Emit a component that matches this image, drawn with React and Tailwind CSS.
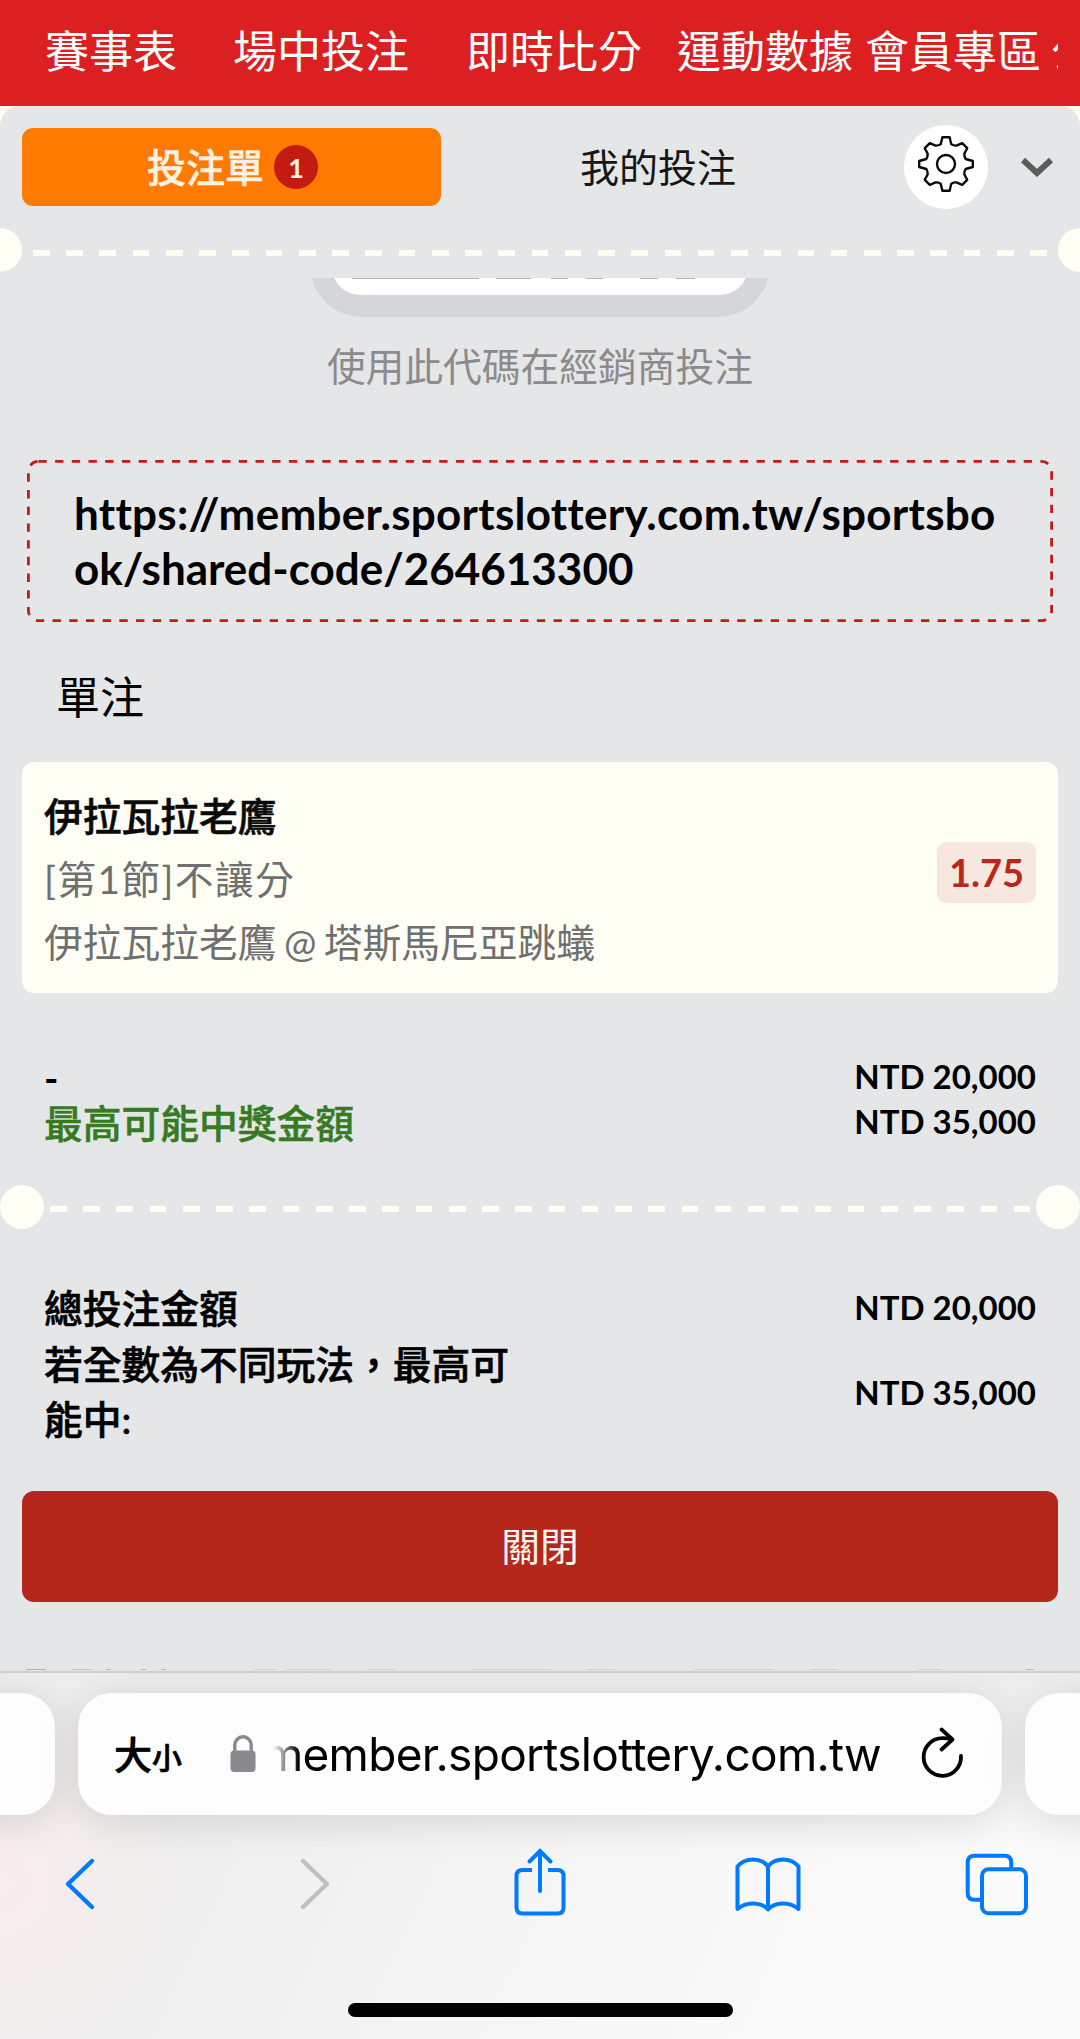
import React from "react";

const navItems = [
  { label: "賽事表", space: "mr-[56px]" },
  { label: "場中投注", space: "mr-[57px]" },
  { label: "即時比分", space: "mr-[35px]" },
  { label: "運動數據", space: "mr-[12px]" },
  { label: "會員專區", space: "mr-[10px]" },
  { label: "公告", space: "" },
];

function NavBar() {
  return (
    <nav className="h-[106px] shrink-0 bg-[#dc1f20] pl-[45px] pr-[22px]">
      <div className="flex h-[102px] items-center overflow-hidden whitespace-nowrap text-[44px] leading-none text-white">
        {navItems.map((item) => (
          <span key={item.label} className={`shrink-0 ${item.space}`}>
            {item.label}
          </span>
        ))}
      </div>
    </nav>
  );
}

function GearIcon() {
  return (
    <svg viewBox="0 0 58 58" className="mb-[6px] h-[58px] w-[58px]" fill="none" stroke="#0b0b0b" strokeWidth="2.4" strokeLinejoin="round">
      <path d="M25.4 2.2 H32.6 L34.3 9.3 Q37 10.8 39.4 10.6 L45.2 8.2 L50.2 13.2 L47.3 18.8 Q47.3 21.8 48.6 24 L55.8 26 V32 L48.6 34 Q47.3 36.2 47.3 39.2 L50.2 44.8 L45.2 49.8 L39.4 47.4 Q37 47.2 34.3 48.7 L32.6 55.8 H25.4 L23.7 48.7 Q21 47.2 18.6 47.4 L12.8 49.8 L7.8 44.8 L10.7 39.2 Q10.7 36.2 9.4 34 L2.2 32 V26 L9.4 24 Q10.7 21.8 10.7 18.8 L7.8 13.2 L12.8 8.2 L18.6 10.6 Q21 10.8 23.7 9.3 Z" />
      <circle cx="29" cy="29" r="9" />
    </svg>
  );
}

function Tabs() {
  return (
    <div className="flex h-[78px] items-center pl-[22px]">
      <button className="flex h-[78px] w-[419px] items-center justify-center rounded-[11px] bg-[#ff7a00] pl-[2px] text-[39px] leading-none font-medium text-[#fff1e2] [-webkit-text-stroke:0.5px]">
        投注單
        <span className="ml-[10px] flex h-[44px] w-[44px] items-center justify-center rounded-full bg-[#c31a12] text-[27px] font-bold [-webkit-text-stroke:0px]">
          1
        </span>
      </button>
      <button className="ml-[139px] text-[39px] leading-none text-[#161616]">我的投注</button>
      <button className="ml-[168px] flex h-[84px] w-[84px] shrink-0 items-center justify-center rounded-full bg-white">
        <GearIcon />
      </button>
      <svg viewBox="0 0 34 20" className="ml-[32px] h-[20px] w-[34px]" fill="none" stroke="#5c5c5c" strokeWidth="6">
        <path d="M3 3 L17 16 L31 3" />
      </svg>
    </div>
  );
}

function UrlBox() {
  return (
    <div className="relative mx-[27px] h-[162px] pt-[26px] pl-[47px]">
      <svg className="absolute inset-0 h-full w-full" fill="none" stroke="#c31a1a" strokeWidth="2.8" strokeDasharray="8.35 8.35">
        <rect x="1.4" y="1.4" width="1023.2" height="159.2" rx="10" />
      </svg>
      <p className="w-[932px] text-[44px] leading-[55px] font-bold break-all text-black [font-variant-ligatures:none]">
        <span className="tracking-[0.27px]">https://member.sportslottery.com.tw/sportsbo</span>ok/shared-code/264613300
      </p>
    </div>
  );
}

function BetCard() {
  return (
    <div className="mx-[22px] flex h-[231px] items-center justify-between rounded-[12px] bg-[#fefef4] px-[22px]">
      <div className="pt-[4px] text-[38.75px] leading-[63px] text-[#6f6f6f]">
        <p className="font-medium text-[#0a0a0a] [-webkit-text-stroke:0.6px]">伊拉瓦拉老鷹</p>
        <p className="tracking-[1.4px]">[第1節]不讓分</p>
        <p className="[word-spacing:-2.5px]">伊拉瓦拉老鷹 @ 塔斯馬尼亞跳蟻</p>
      </div>
      <span className="mt-[-10px] flex h-[61px] w-[99px] items-center justify-center rounded-[9px] bg-[#f8e7df] text-[38px] font-bold text-[#b9271b]">
        1.75
      </span>
    </div>
  );
}

function BrowserBar() {
  return (
    <footer className="flex h-[368px] shrink-0 flex-col items-center overflow-hidden border-t-2 border-[#cfcfcf] bg-[radial-gradient(circle_at_0px_210px,#f8ecec_0px,transparent_190px),linear-gradient(to_bottom,#ededed_0px,transparent_180px),linear-gradient(115deg,#eeeeee_20%,#f6f6f6_55%,#fafafa_85%)]">
      <div className="mt-[20px] flex shrink-0 gap-[23px]">
        <div className="h-[122px] w-[160px] rounded-[34px] bg-[#fdfdfd] shadow-[0_6px_40px_rgba(0,0,0,0.12)]" />
        <div className="flex h-[122px] w-[924px] items-center rounded-[34px] bg-[#fdfdfd] pl-[36px] shadow-[0_6px_40px_rgba(0,0,0,0.12)]">
          <div className="flex w-[116px] items-baseline leading-none font-medium text-black [-webkit-text-stroke:0.7px]">
            <span className="text-[38px]">大</span>
            <span className="text-[30px]">小</span>
          </div>
          <svg viewBox="0 0 26 38" className="h-[38px] w-[26px] shrink-0" fill="none">
            <path d="M4.8 17 V10 a8.2 8.2 0 0 1 16.4 0 V17" stroke="#8a898e" strokeWidth="3.4" />
            <rect x="0.5" y="15.5" width="25" height="21.5" rx="4" fill="#8a898e" />
          </svg>
          <div className="ml-[17px] flex w-[608px] justify-end overflow-hidden font-['Inter','Liberation_Sans',sans-serif] text-[46px] leading-[60px] tracking-[-0.7px] whitespace-nowrap text-black [mask-image:linear-gradient(to_right,transparent_0px,black_26px)]">
            <span className="shrink-0">member.sportslottery.com.tw</span>
          </div>
          <svg viewBox="0 0 46 56" className="ml-[38px] h-[56px] w-[46px]" fill="none" stroke="#000" strokeWidth="3.8" strokeLinecap="round" strokeLinejoin="round">
            <path d="M42 30 A18.7 18.8 0 1 1 23.3 12.2 Q29 12.2 33 13.5" />
            <path d="M22.5 3.5 L33.5 13.5 L22.5 23.5" />
          </svg>
        </div>
        <div className="h-[122px] w-[160px] rounded-[34px] bg-[#fdfdfd] shadow-[0_6px_40px_rgba(0,0,0,0.12)]" />
      </div>
      <div className="mt-[31px] flex h-[76px] w-full shrink-0 items-center pl-[62px] text-[#007aff]">
        <svg viewBox="0 0 36 76" className="h-[76px] w-[36px]" fill="none" stroke="currentColor" strokeWidth="4.4" strokeLinecap="round" strokeLinejoin="round">
          <path d="M30 15 L6 38 L30 61" />
        </svg>
        <svg viewBox="0 0 36 76" className="ml-[199px] h-[76px] w-[36px]" fill="none" stroke="#bfbfbf" strokeWidth="4.4" strokeLinecap="round" strokeLinejoin="round">
          <path d="M6 15 L30 38 L6 61" />
        </svg>
        <svg viewBox="0 0 56 76" className="ml-[179px] h-[76px] w-[56px]" fill="none" stroke="currentColor" strokeWidth="4">
          <path d="M20 24 H10.5 Q4.5 24 4.5 30 V61.5 Q4.5 67.5 10.5 67.5 H45.5 Q51.5 67.5 51.5 61.5 V30 Q51.5 24 45.5 24 H36" />
          <path d="M28 45 V5.5 M17.5 15.5 L28 5 L38.5 15.5" strokeLinecap="round" />
        </svg>
        <svg viewBox="0 0 68 76" className="ml-[166px] h-[76px] w-[68px]" fill="none" stroke="currentColor" strokeWidth="4" strokeLinejoin="round">
          <path d="M34 20.5 C27 11 11 11 3.5 20.5 V63 C12 55.5 27 55.5 34 63.5 C41 55.5 56 55.5 64.5 63 V20.5 C57 11 41 11 34 20.5 Z M34 20.5 V63.5" />
        </svg>
        <svg viewBox="0 0 64 76" className="ml-[162px] h-[76px] w-[64px]" fill="none" stroke="currentColor" strokeWidth="4">
          <path d="M17 53.7 H10.5 Q3.7 53.7 3.7 47 V16.5 Q3.7 9.8 10.5 9.8 H40.5 Q47.2 9.8 47.2 16.5 V23" />
          <rect x="18" y="23.2" width="44" height="44" rx="6.5" />
        </svg>
      </div>
      <div className="mt-[81px] h-[14px] w-[385px] shrink-0 rounded-full bg-black" />
    </footer>
  );
}

export default function App() {
  return (
    <div className="flex h-[2039px] w-[1080px] flex-col overflow-hidden bg-[#fefef0] font-['Lato','Noto_Sans_CJK_TC',sans-serif]">
      <NavBar />
      <main className="flex-1 overflow-hidden rounded-t-[20px] bg-[#e5e6e8] pt-[22px]">
        <Tabs />

        <div className="mt-[22px] flex h-[44px] items-center justify-between">
          <div className="ml-[-22px] h-[44px] w-[44px] rounded-full bg-[#fefef4]" />
          <div className="mt-[6px] h-[6px] w-[1014px] bg-[repeating-linear-gradient(to_right,#fefef4_0px,#fefef4_16.62px,transparent_16.62px,transparent_33.24px)]" />
          <div className="mr-[-22px] h-[44px] w-[44px] rounded-full bg-[#fefef4]" />
        </div>

        {/* lower edge of the scrolled QR code */}
        <div className="mx-auto mt-[6px] flex h-[39px] w-[460px] items-end overflow-hidden">
          <div className="h-[120px] w-[460px] shrink-0 rounded-[52px] bg-[#d5d6da] px-[22px] pb-[22px]">
            <div className="flex h-[98px] flex-col justify-end overflow-hidden rounded-[28px] bg-white pb-[16px] pl-[20px]">
              <div className="flex h-px">
                <i className="h-px w-[127px] bg-[#b5b5b5]" />
                <i className="ml-[17px] h-px w-[35px] bg-[#b5b5b5]" />
                <i className="ml-[20px] h-px w-[17px] bg-[#b5b5b5]" />
                <i className="ml-[18px] h-px w-[17px] bg-[#b5b5b5]" />
                <i className="ml-[37px] h-px w-[18px] bg-[#b5b5b5]" />
                <i className="ml-[18px] h-px w-[19px] bg-[#b5b5b5]" />
              </div>
            </div>
          </div>
        </div>

        <p className="mt-[19px] text-center text-[38.75px] leading-[60px] text-[#8b8b8b]">使用此代碼在經銷商投注</p>

        <div className="mt-[64px]">
          <UrlBox />
        </div>

        <h2 className="mt-[45px] ml-[56px] text-[44px] leading-[60px] text-black">單注</h2>

        <div className="mt-[35px]">
          <BetCard />
        </div>

        <div className="mt-[61px] flex h-[100px] justify-between px-[44px] font-bold text-black">
          <div className="text-[38.75px] leading-[46px]">
            <p className="mt-px mb-[-1px]">-</p>
            <p className="font-medium text-[#367b22] [-webkit-text-stroke:0.5px]">最高可能中獎金額</p>
          </div>
          <div className="text-right text-[33px] leading-[44.5px]">
            <p>NTD 20,000</p>
            <p>NTD 35,000</p>
          </div>
        </div>

        <div className="mt-[30px] flex h-[45px] items-center justify-between">
          <div className="h-[44px] w-[44px] rounded-full bg-[#fefef4]" />
          <div className="mt-[5px] h-[6px] w-[980px] bg-[repeating-linear-gradient(to_right,#fefef4_0px,#fefef4_16.62px,transparent_16.62px,transparent_33.24px)]" />
          <div className="h-[44px] w-[44px] rounded-full bg-[#fefef4]" />
        </div>

        <div className="mt-[52px] px-[44px] text-[38.75px] leading-[55.5px] font-medium text-black">
          <div className="flex items-center justify-between">
            <span className="[-webkit-text-stroke:0.6px]">總投注金額</span>
            <span className="mt-[-2px] text-[33px] font-bold">NTD 20,000</span>
          </div>
          <div className="flex items-center justify-between">
            <span className="w-[480px] [-webkit-text-stroke:0.6px]">若全數為不同玩法，最高可能中:</span>
            <span className="mt-[2px] text-[33px] font-bold">NTD 35,000</span>
          </div>
        </div>

        <button className="mt-[43px] ml-[22px] block h-[111px] w-[1036px] rounded-[12px] bg-[#b5261b] text-[38.75px] text-[#fff6f3]">
          關閉
        </button>

        {/* tops of the next text row, just above the browser bar */}
        <div className="mt-[67px] flex h-px pl-[26px]">
          <i className="h-px w-[20px] bg-[#b4b4b8]" />
          <i className="ml-[25px] h-px w-[22px] bg-[#c4c4c8]" />
          <i className="ml-[13px] h-px w-[5px] bg-[#b4b4b8]" />
          <i className="ml-[30px] h-px w-[5px] bg-[#b4b4b8]" />
          <i className="ml-[15px] h-px w-[5px] bg-[#b4b4b8]" />
          <i className="ml-[88px] h-px w-[22px] bg-[#cfcfd3]" />
          <i className="ml-[10px] h-px w-[45px] bg-[#cfcfd3]" />
          <i className="ml-[36px] h-px w-[28px] bg-[#cfcfd3]" />
          <i className="ml-[76px] h-px w-[80px] bg-[#cfcfd3]" />
          <i className="ml-[36px] h-px w-[28px] bg-[#cfcfd3]" />
          <i className="ml-[79px] h-px w-[80px] bg-[#cfcfd3]" />
          <i className="ml-[36px] h-px w-[28px] bg-[#cfcfd3]" />
          <i className="ml-[80px] h-px w-[24px] bg-[#cfcfd3]" />
          <i className="ml-[84px] h-px w-[8px] bg-[#e0a8a8]" />
        </div>
      </main>
      <BrowserBar />
    </div>
  );
}
